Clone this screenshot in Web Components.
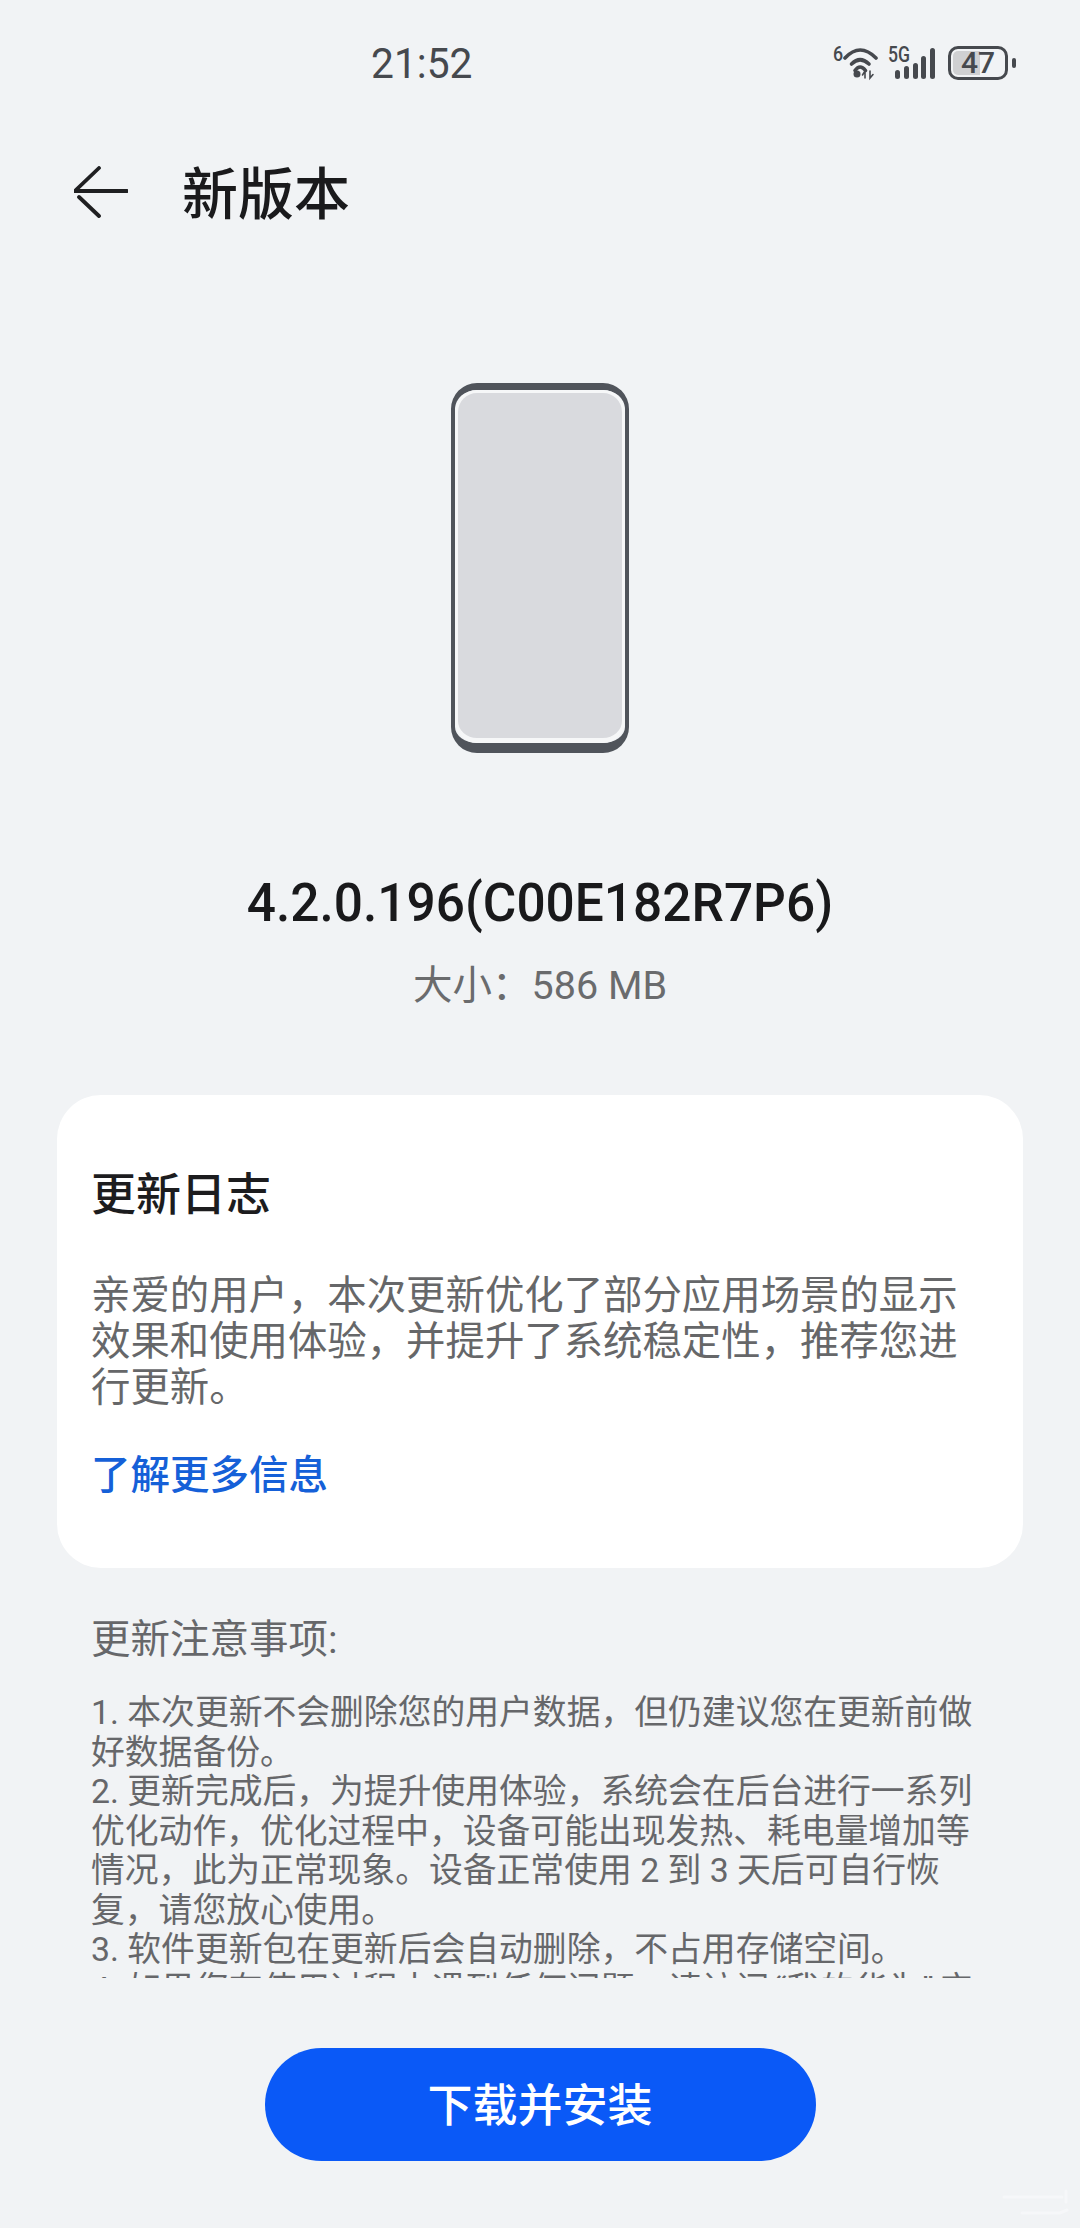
<!DOCTYPE html>
<html lang="zh-CN">
<head>
<meta charset="utf-8">
<title>新版本</title>
<style>
    html, body {
        margin: 0;
        background: #f1f3f5;
    }
    body {
        font-family: "Roboto", "Noto Sans CJK SC", sans-serif;
    }
    /* half-width cells for the curly quotes */
    .q {
        display: inline-block;
        width: 0.5em;
    }
    .q.open {
        text-align: right;
    }
</style>
</head>
<body>
<update-page>
    <status-bar></status-bar>
    <app-header>新版本</app-header>
    <phone-art></phone-art>
    <version-info version="4.2.0.196(C00E182R7P6)" size="大小：586 MB"></version-info>
    <changelog-card heading="更新日志" link="了解更多信息">亲爱的用户，本次更新优化了部分应用场景的显示效果和使用体验，并提升了系统稳定性，推荐您进行更新。</changelog-card>
    <update-notes heading="更新注意事项:">
        <p>1. 本次更新不会删除您的用户数据，但仍建议您在更新前做好数据备份。</p>
        <p>2. 更新完成后，为提升使用体验，系统会在后台进行一系列优化动作，优化过程中，设备可能出现发热、耗电量增加等情况，此为正常现象。设备正常使用 2 到 3 天后可自行恢复，请您放心使用。</p>
        <p>3. 软件更新包在更新后会自动删除，不占用存储空间。</p>
        <p>4. 如果您有使用过程中遇到任何问题，请访问<span class="q open">“</span>我的华为<span class="q">”</span>应</p>
    </update-notes>
    <install-button>下载并安装</install-button>
</update-page>

<script>
class UpdatePage extends HTMLElement {
    constructor() {
        super();
        this.attachShadow({ mode: 'open' });
        this.shadowRoot.innerHTML = `
            <style>
                :host {
                    display: flex;
                    flex-direction: column;
                    position: relative;
                    height: 2228px;
                    overflow: hidden;
                    background: #f1f3f5;
                }
                .mark {
                    position: absolute;
                    right: 8px;
                    bottom: 10px;
                    opacity: 0.5;
                }
            </style>
            <slot></slot>
            <svg class="mark" width="70" height="30" viewBox="0 0 70 30" fill="none" stroke="#fbfcfd" stroke-width="3" stroke-linecap="round">
                <path d="M2 9H60"/>
                <path d="M64 3V14"/>
                <path d="M20 25H58L65 22"/>
            </svg>
        `;
    }
}

class StatusBar extends HTMLElement {
    constructor() {
        super();
        this.attachShadow({ mode: 'open' });
        this.shadowRoot.innerHTML = `
            <style>
                :host {
                    display: flex;
                    align-items: center;
                    height: 128px;
                    padding: 0 64px 0 371px;
                    color: #46494e;
                }
                .time {
                    font-size: 42px;
                    line-height: 48px;
                    transform-origin: left center;
                    transform: scaleX(0.97);
                }
                .icons {
                    margin-left: auto;
                    display: flex;
                    align-items: flex-start;
                    height: 36px;
                }
                .wifi, .signal {
                    position: relative;
                    display: block;
                    height: 36px;
                }
                .signal {
                    margin-left: 10px;
                }
                .tag {
                    position: absolute;
                    font-weight: 500;
                    line-height: 20px;
                    transform-origin: left top;
                }
                svg {
                    display: block;
                }
                .battery {
                    position: relative;
                    box-sizing: border-box;
                    width: 60px;
                    height: 34px;
                    border: 3px solid #46494e;
                    border-radius: 10px;
                    display: flex;
                    align-items: center;
                    justify-content: center;
                    font-size: 30px;
                    font-weight: 500;
                    line-height: 28px;
                    overflow: hidden;
                }
                .level {
                    position: absolute;
                    inset: 2px auto 2px 2px;
                    width: 27px;
                    background: #cfd0d2;
                    border-radius: 5px 0 0 5px;
                }
                .battery span {
                    position: relative;
                }
                .power {
                    display: flex;
                    align-items: center;
                    gap: 4px;
                    margin-left: 13px;
                }
                .nub {
                    width: 4px;
                    height: 10px;
                    border-radius: 2px;
                    background: #46494e;
                }
            </style>
            <span class="time">21:52</span>
            <div class="icons">
                <div class="wifi" style="width:46px">
                    <span class="tag" style="left:1px;top:-2px;font-size:21px;transform:scaleX(0.85)">6</span>
                    <svg width="46" height="36" viewBox="0 0 46 36" fill="none" stroke="#46494e" stroke-linecap="round">
                        <path d="M13 12Q28 -4 44 12" stroke-width="3.600"/>
                        <path d="M19.500 18Q28 9.500 37 18" stroke-width="3.600"/>
                        <path d="M23 24.500Q28 17.500 33.500 24.500" stroke-width="3.600"/>
                        <circle cx="25" cy="28" r="3.500" fill="#46494e" stroke="none"/>
                        <path d="M33 32V25L30.500 29M38 25V32L41 28.500" stroke-width="1.600"/>
                    </svg>
                </div>
                <div class="signal" style="width:47px">
                    <span class="tag" style="left:0;top:-1px;font-size:22px;transform:scaleX(0.8)">5G</span>
                    <svg width="47" height="36" viewBox="0 0 47 36" fill="#46494e">
                        <rect x="7" y="24" width="5" height="9" rx="2.500"/>
                        <rect x="16" y="20" width="5" height="13" rx="2.500"/>
                        <rect x="25" y="17" width="5" height="16" rx="2.500"/>
                        <rect x="33" y="10" width="5" height="23" rx="2.500"/>
                        <rect x="42" y="2" width="5" height="31" rx="2.500"/>
                    </svg>
                </div>
                <div class="power">
                    <div class="battery"><i class="level"></i><span>47</span></div>
                    <i class="nub"></i>
                </div>
            </div>
        `;
    }
}

class AppHeader extends HTMLElement {
    constructor() {
        super();
        this.attachShadow({ mode: 'open' });
        this.shadowRoot.innerHTML = `
            <style>
                :host {
                    display: flex;
                    align-items: center;
                    gap: 54px;
                    height: 128px;
                    padding-left: 74px;
                    color: #1a1a1c;
                    font-size: 56px;
                    font-weight: 500;
                }
                svg {
                    display: block;
                    flex: none;
                }
                .title {
                    margin-bottom: 6px;
                }
            </style>
            <svg width="54" height="52" viewBox="0 0 54 52" fill="none" stroke="#1f1f21" stroke-width="3.800" stroke-linecap="round">
                <path d="M25 2L1 25H53"/>
                <path d="M5 31L25 50"/>
            </svg>
            <span class="title"><slot></slot></span>
        `;
    }
}

class PhoneArt extends HTMLElement {
    constructor() {
        super();
        this.attachShadow({ mode: 'open' });
        this.shadowRoot.innerHTML = `
            <style>
                :host {
                    display: block;
                    box-sizing: border-box;
                    align-self: center;
                    width: 178px;
                    height: 370px;
                    margin-top: 127px;
                    border-style: solid;
                    border-color: #50545b;
                    border-width: 7px 4px 10px;
                    border-radius: 26px;
                    background: #f1f3f5;
                }
                .screen {
                    box-sizing: border-box;
                    height: 100%;
                    border-style: solid;
                    border-color: #f6f7f8;
                    border-width: 3px 3px 5px;
                    border-radius: 22px;
                    background: #d9dade;
                }
            </style>
            <div class="screen"></div>
        `;
    }
}

class VersionInfo extends HTMLElement {
    constructor() {
        super();
        this.attachShadow({ mode: 'open' });
        this.shadowRoot.innerHTML = `
            <style>
                :host {
                    display: block;
                    text-align: center;
                    margin-top: 120px;
                }
                .version {
                    font-size: 53px;
                    font-weight: 500;
                    line-height: 60px;
                    color: #19191b;
                    transform: scaleX(0.97);
                }
                .size {
                    margin-top: 28px;
                    font-size: 39.500px;
                    line-height: 50px;
                    color: #6a6b6d;
                }
            </style>
            <div class="version">${this.getAttribute('version')}</div>
            <div class="size">${this.getAttribute('size')}</div>
        `;
    }
}

class ChangelogCard extends HTMLElement {
    constructor() {
        super();
        this.attachShadow({ mode: 'open' });
        this.shadowRoot.innerHTML = `
            <style>
                :host {
                    display: block;
                    margin: 84px 57px 0;
                    padding: 71px 34px 67px;
                    border-radius: 44px;
                    background: #ffffff;
                }
                h2 {
                    margin: 0;
                    font-size: 45px;
                    font-weight: 500;
                    line-height: 60px;
                    color: #1c1c1e;
                }
                p {
                    margin: 47px 0 0;
                    font-size: 39.400px;
                    line-height: 46px;
                    color: #666769;
                }
                a {
                    display: block;
                    margin-top: 40px;
                    font-size: 39.500px;
                    font-weight: 500;
                    line-height: 50px;
                    color: #1560d8;
                }
            </style>
            <h2>${this.getAttribute('heading')}</h2>
            <p><slot></slot></p>
            <a>${this.getAttribute('link')}</a>
        `;
    }
}

class UpdateNotes extends HTMLElement {
    constructor() {
        super();
        this.attachShadow({ mode: 'open' });
        this.shadowRoot.innerHTML = `
            <style>
                :host {
                    display: block;
                    height: 410px;
                    overflow: hidden;
                    padding: 0 107.500px 0 91px;
                    color: #66676a;
                    font-size: 33.800px;
                    line-height: 39.500px;
                }
                h3 {
                    margin: 49px 0 30px;
                    font-size: 39.500px;
                    font-weight: 400;
                    line-height: 46px;
                }
                ::slotted(p) {
                    margin: 0;
                }
            </style>
            <h3>${this.getAttribute('heading')}</h3>
            <slot></slot>
        `;
    }
}

class InstallButton extends HTMLElement {
    constructor() {
        super();
        this.attachShadow({ mode: 'open' });
        this.shadowRoot.innerHTML = `
            <style>
                :host {
                    display: block;
                    align-self: center;
                    margin-top: 70px;
                }
                button {
                    display: block;
                    width: 551px;
                    height: 113px;
                    padding: 0 0 5px;
                    border: none;
                    border-radius: 57px;
                    background: #0a59f7;
                    color: #ffffff;
                    font-family: inherit;
                    font-size: 45px;
                    font-weight: 500;
                }
            </style>
            <button><slot></slot></button>
        `;
    }
}

customElements.define('update-page', UpdatePage);
customElements.define('status-bar', StatusBar);
customElements.define('app-header', AppHeader);
customElements.define('phone-art', PhoneArt);
customElements.define('version-info', VersionInfo);
customElements.define('changelog-card', ChangelogCard);
customElements.define('update-notes', UpdateNotes);
customElements.define('install-button', InstallButton);
</script>
</body>
</html>
